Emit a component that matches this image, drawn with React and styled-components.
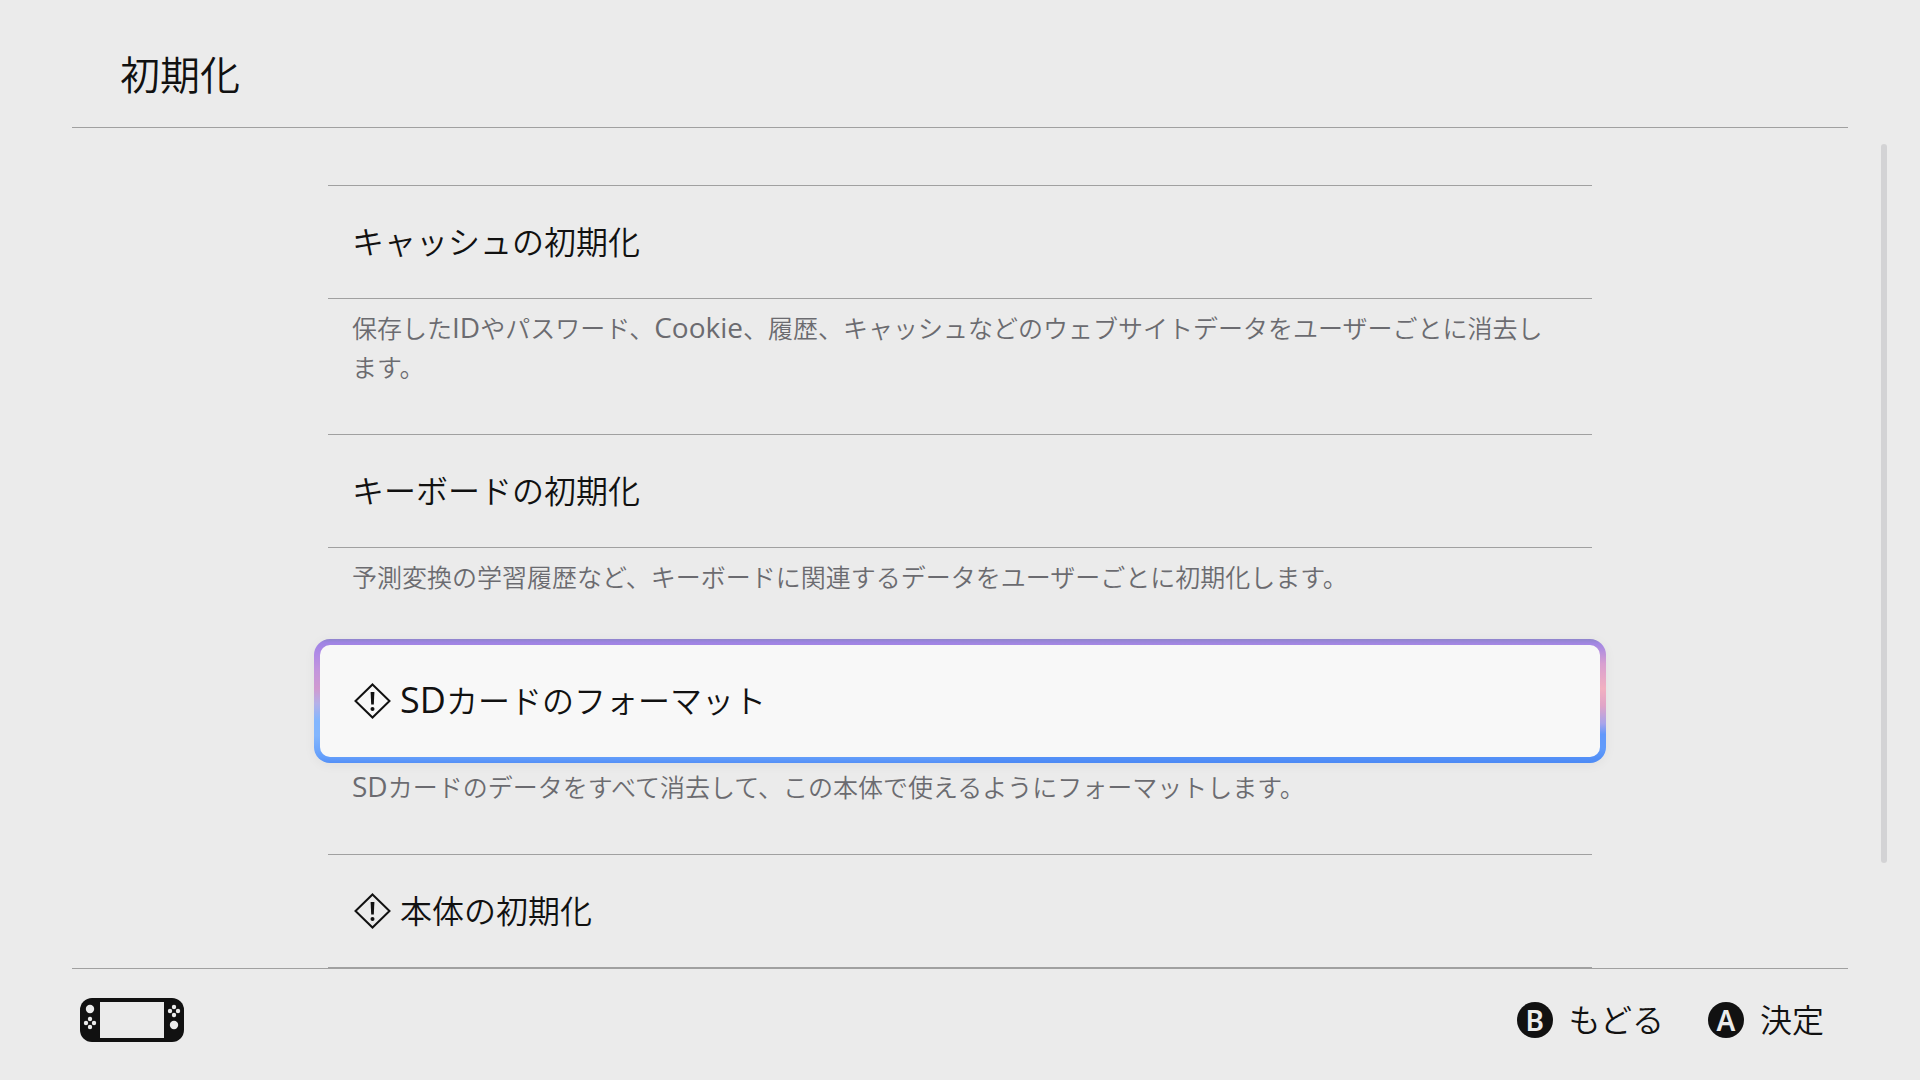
import React, {Fragment} from 'react';
import styled, {createGlobalStyle, css} from 'styled-components';

const GlobalStyle = createGlobalStyle`
  *, *::before, *::after {
    box-sizing: border-box;
  }
  body {
    margin: 0;
    background-color: #ebebeb;
    color: #111;
    font-family: 'Noto Sans CJK JP', 'Noto Sans', sans-serif;
    font-weight: 350;
  }
`;

const Screen = styled.div`
  display: flex;
  flex-direction: column;
  min-height: 100vh;
`;

const Header = styled.header`
  display: flex;
  align-items: center;
  min-height: 128px;
  margin: 0 72px;
  padding: 18px 48px 0;
  border-bottom: 1px solid #a0a0a0;
`;

const Title = styled.h1`
  margin: 0;
  font-size: 40px;
  line-height: 60px;
  font-weight: 350;
`;

const Main = styled.main`
  flex: 1;
  display: grid;
  grid-template-columns: minmax(72px, 1fr) minmax(0, 1264px) minmax(72px, 1fr);
`;

const List = styled.ul`
  grid-column: 2;
  margin: 0;
  padding: 57px 0 0;
  list-style: none;
`;

const focusRing = css`
  width: calc(100% + 28px);
  height: 124px;
  margin: -5px -14px;
  padding: 0 32px;
  border: 6px solid transparent;
  border-radius: 16px;
  background:
    linear-gradient(#f8f8f8, #f8f8f8) padding-box,
    linear-gradient(#8f85cc, #9f84e4 3%, #b08ae6 12%, #c496dc 26%, #d09ad0 40%, #b4b0e8 52%, #82b6fe 66%, #82b6fe 78%, #659ffb 95%, #5490f7) left / 50% 100% no-repeat border-box,
    linear-gradient(#8f85cc, #a387e4 4%, #d8a0d0 20%, #f2b0c0 40%, #e0a4c8 54%, #a8a4ea 68%, #6298fb 77%, #629cfb 88%, #4c8af5) right / 50% 100% no-repeat border-box;
  box-shadow: 0 2px 12px rgba(0, 0, 0, 0.05);
`;

const Row = styled.button`
  display: flex;
  align-items: center;
  gap: 8px;
  width: 100%;
  height: 114px;
  padding: 0 24px;
  border: solid #a0a0a0;
  border-width: 1px 0;
  background: none;
  color: inherit;
  font: inherit;
  font-size: 32px;
  text-align: left;
  cursor: pointer;
  outline: none;
  ${({$focused}) => $focused && focusRing}
`;

const Label = styled.span`
  padding-bottom: 4px;
  line-height: 48px;
`;

const Description = styled.p`
  margin: 0;
  padding: 9px 28px 48px 24px;
  color: #6b6b70;
  font-size: 25px;
  line-height: 39px;
`;

const Latin = styled.span`
  font-family: 'Open Sans', 'Noto Sans', sans-serif;
  font-size: ${({$size}) => $size}px;
  font-weight: 400;
  line-height: 1;
`;

const ScrollBar = styled.div`
  grid-column: 3;
  justify-self: end;
  width: 6px;
  margin: 16px 33px;
`;

const ScrollThumb = styled.div`
  height: 89%;
  border-radius: 3px;
  background-color: #d3d3d5;
`;

const Footer = styled.footer`
  display: flex;
  align-items: center;
  justify-content: space-between;
  min-height: 112px;
  margin: 0 72px;
  padding: 0 24px 10px 8px;
  border-top: 1px solid #a0a0a0;
`;

const Actions = styled.div`
  display: flex;
  gap: 44px;
`;

const Action = styled.button`
  display: flex;
  align-items: center;
  gap: 16px;
  padding: 0;
  border: 0;
  background: none;
  color: inherit;
  font: inherit;
  font-size: 32px;
  cursor: pointer;
`;

const Badge = styled.span`
  width: 36px;
  height: 36px;
  border-radius: 50%;
  background-color: #111;
  color: #ebebeb;
  font-family: 'Noto Sans', 'Open Sans', sans-serif;
  font-size: 28px;
  font-weight: 600;
  line-height: 36px;
  text-align: center;
`;

const WarningIcon = () => (
    <svg width="40" height="40" viewBox="0 0 40 40" aria-hidden="true">
        <path d="M20.5 3.5L37.5 20L20.5 36.5L3.5 20Z" fill="none" stroke="#111" strokeWidth="2"/>
        <path d="M18.6 11H22.4L21.8 23.5H19.2Z" fill="#111"/>
        <circle cx="20.5" cy="28" r="2" fill="#111"/>
    </svg>
);

const ConsoleIcon = () => (
    <svg width="104" height="44" viewBox="0 0 104 44" role="img" aria-label="本体">
        <rect width="104" height="44" rx="12" fill="#111"/>
        <g fill="#ebebeb">
            <rect x="20" y="4" width="64" height="36"/>
            <circle cx="10" cy="11" r="4.2"/>
            <circle cx="10" cy="21" r="2.2"/>
            <circle cx="6" cy="25" r="2.2"/>
            <circle cx="14" cy="25" r="2.2"/>
            <circle cx="10" cy="29" r="2.2"/>
            <circle cx="94" cy="9" r="2.2"/>
            <circle cx="90" cy="13" r="2.2"/>
            <circle cx="98" cy="13" r="2.2"/>
            <circle cx="94" cy="17" r="2.2"/>
            <circle cx="94" cy="27" r="4.2"/>
        </g>
    </svg>
);

const items = [
    {
        label: 'キャッシュの初期化',
        text: '保存したIDやパスワード、Cookie、履歴、キャッシュなどのウェブサイトデータをユーザーごとに消去します。',
    },
    {
        label: 'キーボードの初期化',
        text: '予測変換の学習履歴など、キーボードに関連するデータをユーザーごとに初期化します。',
    },
    {
        label: 'SDカードのフォーマット',
        text: 'SDカードのデータをすべて消去して、この本体で使えるようにフォーマットします。',
        warning: true,
        focused: true,
    },
    {
        label: '本体の初期化',
        warning: true,
    },
];

// latin words are set a little larger than the kana around them
const MixedText = ({size, children}) => (
    <Fragment>
        {children.split(/([A-Za-z]+)/).map((part, i) => (
            i % 2 ? <Latin key={i} $size={size}>{part}</Latin> : part
        ))}
    </Fragment>
);

const App = () => (
    <Screen>
        <GlobalStyle/>
        <Header>
            <Title>初期化</Title>
        </Header>
        <Main>
            <List>
                {items.map(item => (
                    <li key={item.label}>
                        <Row type="button" $focused={item.focused}>
                            {item.warning && <WarningIcon/>}
                            <Label><MixedText size={36}>{item.label}</MixedText></Label>
                        </Row>
                        {item.text && (
                            <Description><MixedText size={28}>{item.text}</MixedText></Description>
                        )}
                    </li>
                ))}
            </List>
            <ScrollBar>
                <ScrollThumb/>
            </ScrollBar>
        </Main>
        <Footer>
            <ConsoleIcon/>
            <Actions>
                <Action type="button"><Badge>B</Badge><Label>もどる</Label></Action>
                <Action type="button"><Badge>A</Badge><Label>決定</Label></Action>
            </Actions>
        </Footer>
    </Screen>
);

export default App;
